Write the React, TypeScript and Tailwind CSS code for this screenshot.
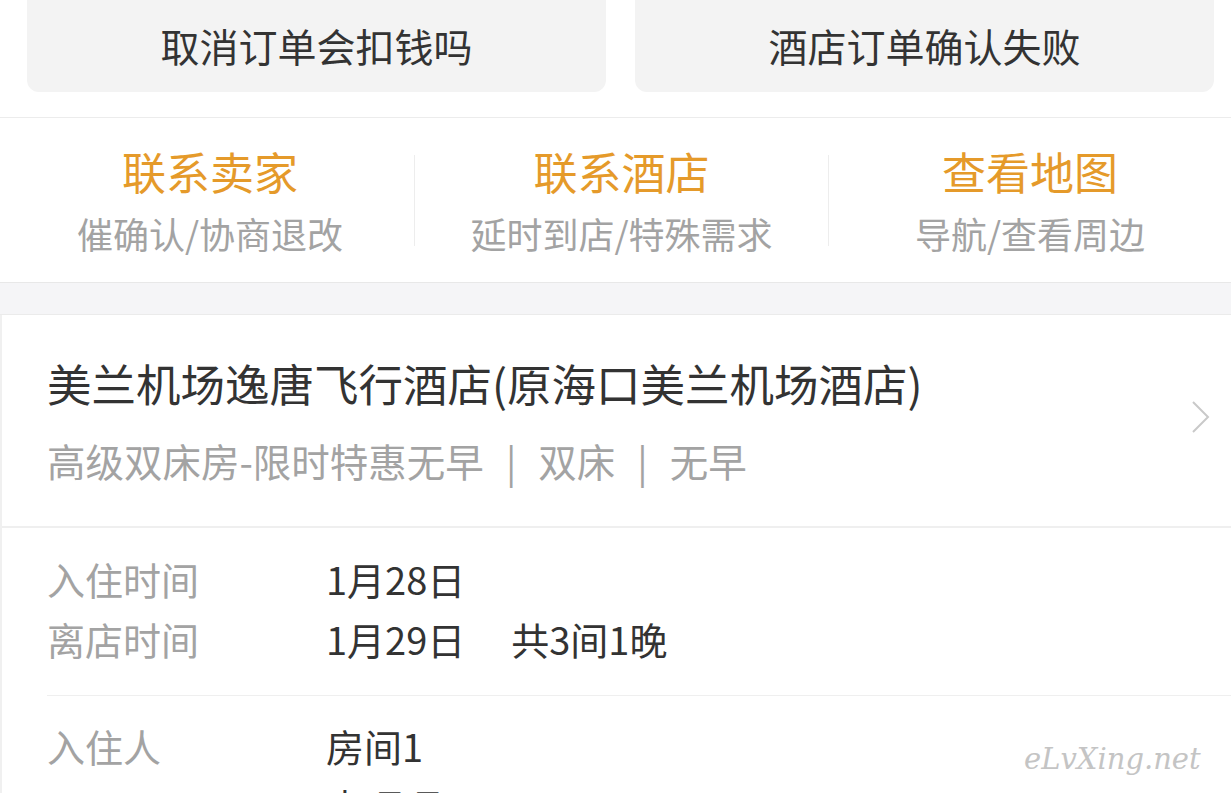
import React from "react";

const font = { fontFamily: '"Noto Sans CJK SC", "Noto Sans", sans-serif' };

function Shortcut({ title, sub, divider, className }: { title: string; sub: string; divider?: boolean; className: string }) {
    return (
        <div className={"flex items-center " + className}>
            {divider && <div className="w-px h-[91px] bg-[#ededed] shrink-0" />}
            <div className="flex-1 flex flex-col items-center">
                <div className="text-[44px] leading-[56px] text-[#e59a2a]">{title}</div>
                <div className="text-[36px] leading-[50px] text-[#a3a3a3] mt-[9px]">{sub}</div>
            </div>
        </div>
    );
}

function InfoRow({ label, children }: { label: string; children: React.ReactNode }) {
    return (
        <div className="flex text-[38px] leading-[60px]">
            <div className="w-[279px] shrink-0 text-[#a3a3a3]">{label}</div>
            <div className="text-[#333]">{children}</div>
        </div>
    );
}

export default function App() {
    return (
        <div className="relative w-[1231px] h-[793px] overflow-hidden bg-white" style={font}>
            {/* quick questions */}
            <div className="flex gap-[29px] pl-[27px] pr-[17px] pb-[25px] border-b border-[#ececec]">
                <div className="flex-1 h-[104px] -mt-[12px] pt-[10px] rounded-[12px] bg-[#f3f3f3] flex items-center justify-center text-[39px] text-[#333]">
                    取消订单会扣钱吗
                </div>
                <div className="flex-1 h-[104px] -mt-[12px] pt-[10px] rounded-[12px] bg-[#f3f3f3] flex items-center justify-center text-[39px] text-[#333]">
                    酒店订单确认失败
                </div>
            </div>

            {/* contact shortcuts */}
            <div className="flex pt-[25px] pb-[24px] border-b border-[#e8e8e8]">
                <Shortcut className="w-[414px] pl-[6px]" title="联系卖家" sub="催确认/协商退改" />
                <Shortcut className="w-[414px] pl-[0px]" divider title="联系酒店" sub="延时到店/特殊需求" />
                <Shortcut className="flex-1" divider title="查看地图" sub="导航/查看周边" />
            </div>

            <div className="h-[32px] bg-[#f5f5f7] border-b border-[#ebebeb]" />

            {/* hotel card */}
            <div className="border-l-2 border-[#f0f0f0]">
                <div className="flex items-center pl-[45px] pr-[19px] pt-[40px] pb-[41px] border-b-2 border-[#efefef]">
                    <div className="flex-1">
                        <div className="text-[44.5px] leading-[56px] text-[#333]">美兰机场逸唐飞行酒店(原海口美兰机场酒店)</div>
                        <div className="text-[38.5px] leading-[50px] text-[#a3a3a3] mt-[24px] flex">
                            <span>高级双床房-限时特惠无早</span>
                            <span className="mx-[22px]">|</span>
                            <span>双床</span>
                            <span className="mx-[22px]">|</span>
                            <span>无早</span>
                        </div>
                    </div>
                    <svg width="22" height="36" viewBox="0 0 22 36" fill="none" className="-mt-[6px]">
                        <path d="M3 3 L18 18 L3 33" stroke="#c9c9c9" strokeWidth="2" />
                    </svg>
                </div>

                <div className="pl-[45px]">
                    <div className="pt-[21px] pb-[26px] border-b border-[#efefef]">
                        <InfoRow label="入住时间">1月28日</InfoRow>
                        <InfoRow label="离店时间">
                            1月29日<span className="ml-[46px]">共3间1晚</span>
                        </InfoRow>
                    </div>
                    <div className="pt-[20px]">
                        <InfoRow label="入住人">
                            <div>房间1</div>
                            <div>李珂珂</div>
                        </InfoRow>
                    </div>
                </div>
            </div>

            {/* watermark */}
            <div
                className="absolute left-[1024px] top-[738px] text-[29px] italic text-[#c4c4c4]"
                style={{ fontFamily: '"DejaVu Serif", serif' }}
            >
                eLvXing.net
            </div>
        </div>
    );
}
